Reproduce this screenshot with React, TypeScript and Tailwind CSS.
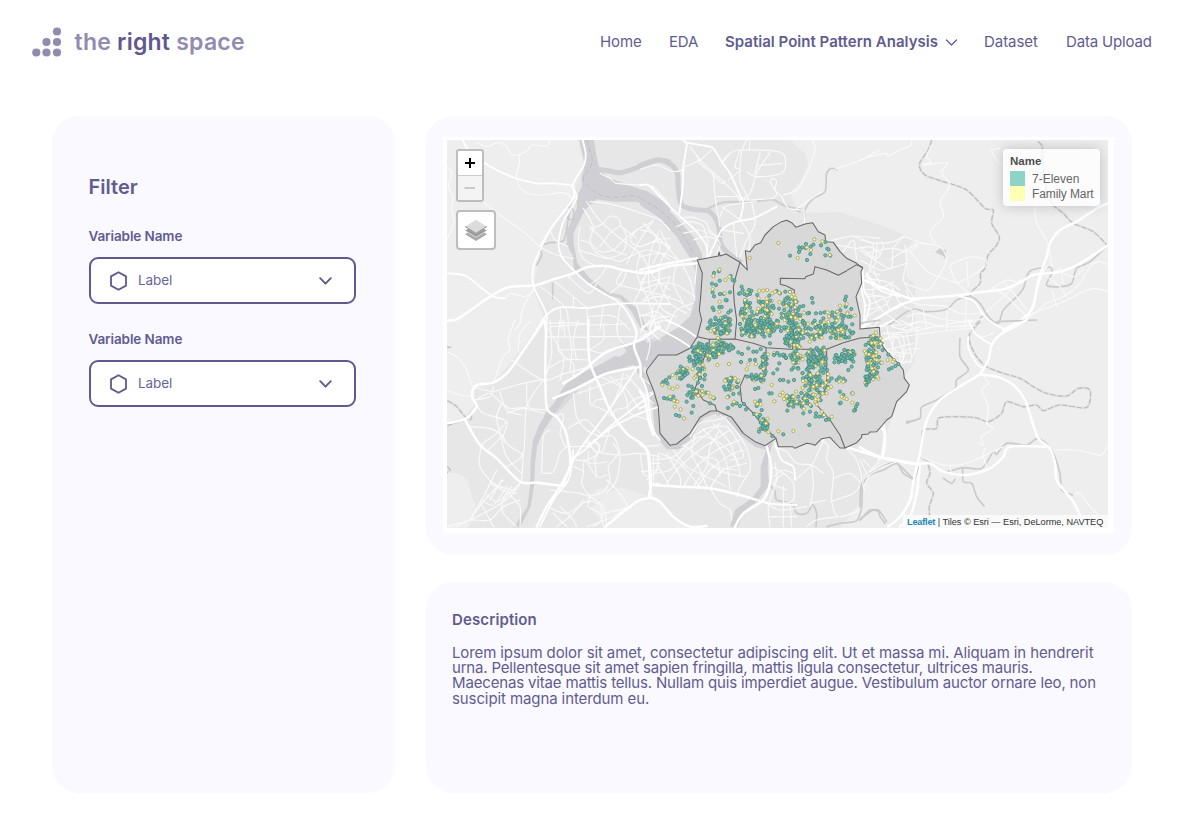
import React from "react";

type Tile = {
  x: number;
  y: number;
  major?: string[];
  mid?: string[];
  minor?: string[];
  stream?: string[];
  trail?: string[];
};

// Street geometry, grouped by map sheet; each sheet is drawn at three units per pixel.
const tiles: Tile[] = [
  {
    x: 440,
    y: 130,
    major: [
      "20,572 50,568 100,535 150,500 205,472 285,466 340,448 400,430 440,412 500,408 540,418 600,428 640,422 690,408",
    ],
    mid: [
      "68,30 85,60 135,100 180,125 230,146 290,160 340,160 392,166 405,185",
      "428,30 437,70 432,105 400,160 402,195 380,235 330,300 300,360 280,410 280,466 300,510 320,555 316,600",
      "400,180 410,205 372,270 358,320 356,350 368,385 410,430 450,465 500,495 540,520 570,560 590,600",
      "290,600 320,555 360,532 440,534 490,526 560,520 690,522",
      "405,200 340,285 300,350",
      "20,430 75,436 120,470 160,500 195,505",
    ],
    minor: [
      "110,38 140,50 175,38 200,50 215,75 236,75 238,100 230,140 245,178 290,195 370,188 395,205",
      "236,75 262,62 275,45 320,48 330,30",
      "130,215 180,255 250,305 300,350 350,375 400,385",
      "20,110 35,130 25,170 40,200 35,235 42,280 20,330",
      "195,505 215,490 255,500 285,480",
      "285,470 250,530 240,580 225,600",
      "480,130 510,145 530,160 600,165 640,170 690,225",
      "450,215 500,220 560,235 620,255 660,270 690,300",
      "440,215 470,260 510,300 560,340 600,370 620,400 640,440 690,480",
      "430,235 460,290 450,330 470,370 540,395",
      "450,300 490,280 500,265 520,258 538,268 545,290 590,325",
      "450,290 480,320 520,360 560,375",
      "420,290 415,340 430,385 470,410",
      "420,330 450,340 480,365 520,360 540,340 590,300 640,275",
      "415,360 450,370 500,385 545,370 560,330 545,290 510,310 480,350",
      "590,300 570,330 600,350 650,330 690,325",
      "540,395 580,375 620,360 660,370 690,390",
      "600,370 590,420 600,460 620,500 640,560 650,600",
      "500,410 480,440 450,465",
      "560,425 545,460 510,490",
      "620,425 600,480 580,520",
      "660,415 650,470 610,510",
      "690,440 650,450 600,460",
      "300,470 340,500 380,540 385,600",
      "345,455 400,500 440,534",
      "385,440 445,490 470,460",
      "440,534 445,600",
      "400,500 400,534",
      "490,526 480,600",
      "540,524 530,600",
      "320,580 400,578 440,582",
      "360,532 365,600",
      "445,560 520,558 570,600",
      "590,525 610,600",
      "640,525 630,600",
      "690,560 600,555",
      "330,300 345,330 385,350",
      "550,420 530,460 600,480 690,500",
      "610,280 640,310 660,350 640,400",
      "640,270 600,330 560,400",
      "660,300 690,360",
      "600,600 625,580 690,570",
    ],
    stream: [
      "395,225 385,265 372,330 330,338 300,350 305,375 290,405",
      "338,460 338,505",
      "384,230 400,240 398,270 380,262",
    ],
  },
  {
    x: 640,
    y: 130,
    major: ["0,430 40,425 90,408 170,400", "0,420 60,405 170,385"],
    mid: [
      "130,30 140,45 130,110 128,170 118,250",
      "140,38 200,48 220,55 245,95 270,130 295,185 310,220 300,270",
      "0,165 25,165 60,200 110,250 165,300 200,350 200,400",
      "200,395 245,300 290,275 340,265 410,230",
      "668,415 672,480 690,520 668,600",
    ],
    minor: [
      "0,118 50,105 100,125 135,118",
      "150,50 190,100 240,145 290,195 300,215",
      "135,110 180,90 215,60",
      "170,75 180,100 215,130 245,160 255,155",
      "220,130 225,200 240,290",
      "245,95 270,70 300,60 425,68 428,128 350,140 320,125",
      "270,70 250,95",
      "330,30 328,62",
      "300,60 285,110 300,120 265,150",
      "390,68 352,125 330,190 300,210",
      "360,68 345,130",
      "350,108 425,100",
      "320,30 305,65 300,150 325,205",
      "228,200 290,200 330,210 400,205",
      "240,260 255,230 300,220 350,215",
      "245,230 300,270 330,320 325,370",
      "335,215 345,280 320,330 300,380",
      "400,205 410,190 390,155 400,145 410,155 405,180 425,200 445,235 490,240",
      "515,30 525,60 500,130 470,180 430,195",
      "720,60 690,75 665,90 585,118",
      "465,240 500,215 545,185",
      "495,240 493,280",
      "120,265 160,262 200,280 210,310 245,320",
      "110,290 150,275 190,290 205,350",
      "130,310 180,300 200,310",
      "245,300 310,310",
      "210,300 240,340 230,370",
      "160,330 200,320 235,330",
      "280,280 290,380",
      "0,300 40,310 80,350 120,395",
      "0,350 50,335 90,350",
      "0,380 70,370 130,400",
      "55,310 30,370 25,420 0,460",
      "90,350 60,400 60,460 90,520 140,550",
      "110,400 100,460 130,520",
      "25,425 30,480 70,540 110,560",
      "0,480 60,460 110,465 165,500",
      "0,520 50,500 110,510 150,540",
      "30,600 60,520 90,440",
      "0,560 50,545 90,580",
      "80,600 110,540 160,520",
      "130,410 150,450 165,510",
      "170,405 165,460",
      "0,600 40,570 80,560",
      "565,335 600,325 640,318 720,325",
      "590,345 650,355 690,350 720,370",
      "610,365 640,330 650,390",
      "640,320 700,345 690,420 720,435",
      "680,440 700,470 720,470",
      "675,490 720,500",
      "680,540 720,530",
      "700,420 720,460",
      "670,575 700,590 720,560",
    ],
    stream: [
      "495,260 497,235 520,205 555,185 560,130 575,115 590,120",
      "480,245 460,238",
    ],
  },
  {
    x: 860,
    y: 130,
    major: [
      "10,450 60,470 110,490 150,505 220,502 300,495 370,485 430,478 480,458 520,435 600,425 660,400 745,345",
      "0,595 60,560 120,525 180,505",
      "430,600 490,565 520,530 535,450 560,380 570,340 600,300 650,275 680,255 720,230 745,220",
    ],
    mid: [
      "0,420 5,480 15,530 8,600",
      "20,430 60,480 120,500",
      "500,570 520,520 545,430 560,410",
      "300,500 340,512 370,555 400,580 440,600",
    ],
    minor: [
      "0,90 30,80 80,70 85,78 120,60 150,48 155,32",
      "215,45 200,80 215,95 190,105 260,98 245,130 270,165 240,215 250,260 210,305 225,340",
      "420,55 395,60 410,90 430,110",
      "550,170 525,230 530,280 555,320 570,370 575,410",
      "0,330 50,340 100,335 130,320 160,330 190,340 240,350 260,390 235,440 205,480 160,470 135,460",
      "130,320 100,355 90,415 0,360",
      "0,350 50,385 70,350 65,335",
      "20,370 60,360 100,355 145,365 175,345",
      "0,390 60,420 90,415 140,400",
      "50,345 45,400 15,440",
      "135,345 140,400 130,450 160,500",
      "150,365 180,400 210,430 290,460 325,490",
      "175,340 120,370 90,390",
      "290,460 330,440 360,420 380,395 340,380 290,395 270,410 290,460",
      "320,395 325,470",
      "20,445 80,455 120,480",
      "10,480 60,475 100,455",
      "20,500 70,500 90,540 120,530",
      "45,450 40,500 70,545 120,580",
      "10,530 50,515 110,490",
      "20,560 80,520 100,480",
      "90,460 120,520 155,540",
      "140,480 160,520 250,528 300,550 370,550",
      "140,560 180,550 260,570 330,575 370,565",
      "160,540 155,600",
      "190,540 200,600",
      "260,540 260,600",
      "320,505 315,600",
      "120,600 180,575 250,590 360,585",
      "390,480 440,450 480,460",
      "400,475 440,500 500,560",
      "430,455 470,500 500,540",
      "380,545 430,500 480,450",
      "560,440 600,470 620,500",
      "575,480 590,530",
      "580,440 600,415 610,460",
      "430,600 520,550 600,520 660,490 700,475 745,485",
      "450,600 500,570 560,520 610,500 660,460 690,410 720,395 745,405",
      "600,425 640,440 670,420",
      "740,350 660,405",
    ],
    stream: [
      "80,590 140,545 165,537 200,545 260,538 290,510 330,500 360,520 385,560 415,580 430,540 470,500 490,475 500,440 515,420 570,412 575,430 560,465 600,470 635,460 650,415 690,395 745,345",
      "370,555 350,580 340,600",
    ],
    trail: [
      "215,30 205,60 178,103 195,135 250,155 320,180 375,235 400,240 395,280 418,320 410,345 385,375 375,415 362,430 360,460 335,485 330,500",
      "535,35 547,50 548,90 560,180 580,225 610,250 640,280 700,305 745,350",
    ],
  },
  {
    x: 440,
    y: 320,
    major: [
      "20,310 75,297 110,260 98,235 98,210 115,193 160,188 205,155 255,85 310,5",
      "312,0 318,30 316,120 320,262 350,290 375,330 388,390 390,440 360,500 320,560 290,620",
      "75,300 120,375 170,415 240,485 290,488 370,498",
      "445,0 448,120 480,200 510,270 560,340 610,375 625,410 632,520",
      "575,0 590,40 582,80 600,130 602,170",
      "370,190 420,160 500,95 590,65 660,20",
      "340,235 400,210 440,190 500,160 600,140",
      "495,620 570,560 600,540 640,535 660,545",
    ],
    mid: [
      "590,145 500,280 440,360 400,420 385,480 340,540 300,620",
      "390,420 440,385 510,320 600,250 640,220",
      "440,380 520,320 600,280 660,260",
      "602,170 620,210 632,300 645,340 660,360",
      "370,498 395,420 400,390",
    ],
    minor: [
      "20,95 50,110 80,150 100,200 160,215",
      "20,210 60,225 100,228",
      "225,0 205,55 210,90 190,110 160,190",
      "235,95 240,40 270,5",
      "215,120 310,180 375,160 450,140",
      "160,215 230,195 310,178",
      "115,235 150,220 185,250 210,265 260,262",
      "100,240 150,230 160,200",
      "180,215 200,270 245,285",
      "310,180 260,260 250,400 200,440",
      "260,190 265,260 320,270",
      "110,255 130,280 200,305 190,360 250,405",
      "200,305 170,340 130,370 120,400 120,440 160,490 220,510 240,490",
      "90,320 150,325 185,345 200,370",
      "200,280 250,265 310,280",
      "185,250 170,290 180,340 200,410 245,460",
      "140,395 185,350",
      "250,400 245,480",
      "170,450 130,530 90,600",
      "90,600 130,545 190,480",
      "90,600 150,570 210,530 240,490",
      "125,540 160,555 200,500",
      "150,490 200,515 230,520",
      "140,525 175,545 215,500",
      "185,480 150,540",
      "50,620 90,600 150,600 190,560 240,540",
      "120,545 150,600 160,620",
      "240,490 190,540 190,580 230,620",
      "205,520 240,560 240,620",
      "20,620 80,605",
      "330,0 335,100 320,160",
      "316,50 445,52",
      "360,0 355,90 400,130 400,170",
      "385,20 395,90 390,150",
      "415,0 400,60 410,120",
      "330,20 440,12",
      "355,90 445,88",
      "320,150 370,120 445,120",
      "370,0 375,50",
      "448,15 560,12",
      "490,15 490,60 448,90",
      "450,50 580,50",
      "530,12 535,50 560,80",
      "320,20 370,110 360,180",
      "448,90 490,100 520,90",
      "600,50 640,30 660,5",
      "640,0 630,30 660,60",
      "310,460 340,455 360,400 380,380",
      "330,330 310,350 305,460",
      "350,290 365,280 370,300 360,340 375,380",
      "400,220 410,290 440,330 480,350",
      "385,325 410,310 440,300 490,350",
      "450,200 450,250 480,265 500,275 520,290 525,270 560,262 580,240 640,215",
      "415,220 460,205 530,180 560,175",
      "480,170 540,200 560,240 570,280 630,300",
      "510,170 560,210 600,270",
      "560,165 600,210 640,250",
      "460,250 470,240 500,235",
      "550,160 540,200 520,250",
      "380,380 450,380 470,395 540,405 600,400 660,410",
      "430,370 470,370 475,400 440,420 400,420",
      "440,355 465,395 490,390 510,320",
      "400,440 430,455 425,490 450,525 490,515 510,480 505,440 535,400 520,370",
      "430,455 435,420 470,470 500,465",
      "445,395 450,430 500,425",
      "460,360 480,380 465,420 470,470",
      "480,350 520,350 540,405 530,480 500,520",
      "330,510 380,515 420,520 450,530",
      "450,525 445,560 480,580 490,620",
      "320,560 380,580 440,545 480,555 485,600 460,620",
      "360,560 400,600 410,620",
      "340,580 380,620",
      "430,540 400,580 350,620",
      "500,480 530,510 560,560 490,580",
      "440,620 520,590 560,560",
      "600,400 610,460 625,470",
      "625,430 660,430",
      "605,455 660,450",
      "640,410 640,490",
      "625,490 660,490",
      "610,380 660,375",
      "500,620 490,560 450,530",
    ],
    trail: [
      "22,242 50,260 75,290 90,300 95,290 88,282",
      "22,316 70,302",
      "22,82 32,82",
      "22,440 30,450 22,458",
    ],
  },
  {
    x: 640,
    y: 320,
    major: [
      "0,372 25,400 32,495 28,530 60,545 100,590 150,620 200,618",
      "35,495 120,500 210,505 300,525 350,540",
      "380,380 392,430 390,490 370,540 310,580 285,620",
      "615,380 680,400 730,415 810,430 840,432",
      "725,300 735,340 725,415",
      "780,620 810,590 830,520 840,430",
      "0,215 15,240 25,300 40,345",
    ],
    mid: [
      "45,20 110,55 150,80",
      "80,0 130,25 175,55",
      "0,265 20,255",
      "405,370 425,420 460,440 465,480",
      "660,380 690,400",
      "350,540 400,552 470,555",
    ],
    minor: [
      "10,30 30,70 20,120",
      "30,0 0,40",
      "5,20 50,10 70,0",
      "0,170 40,200",
      "150,350 180,310 230,300 260,290",
      "240,285 260,300 300,350 325,400 330,450 300,500 290,530",
      "160,350 200,325 260,320 290,360 310,410 270,420",
      "120,390 180,350 240,370 290,420 300,470",
      "100,390 140,440 200,470 260,500",
      "60,400 120,430 180,500",
      "130,375 180,410 230,440 290,450",
      "45,420 100,410 140,380",
      "40,460 90,450 130,400 190,350 240,310",
      "80,490 120,440 180,390 270,330",
      "130,500 170,440 230,390 300,360",
      "170,505 210,450 280,400 315,390",
      "210,505 250,450 320,430",
      "190,330 230,370 260,430 270,510",
      "220,310 270,370 295,440",
      "80,400 120,470 120,500",
      "50,430 90,500",
      "165,345 155,400 180,450 200,500",
      "240,330 210,380 200,440 160,500",
      "20,480 50,450 55,400",
      "200,430 260,460 320,470",
      "180,410 230,420 240,470",
      "400,380 440,395 470,430 515,435 550,460",
      "395,440 430,460 460,490 460,540 430,550",
      "430,460 400,490 440,510",
      "400,470 430,450 460,460",
      "465,480 515,435 540,385 555,355",
      "515,435 520,500 510,560",
      "545,360 565,380 560,420 580,460 575,540 595,590 660,570",
      "580,475 630,460 665,490",
      "620,385 650,420 665,480 640,520 570,545",
      "510,550 560,540",
      "405,430 410,480 385,560 390,620",
      "430,500 430,620",
      "390,590 470,590",
      "450,550 455,620",
      "380,550 420,570 500,560",
      "500,620 530,600 595,590",
      "30,500 40,540",
      "210,505 240,550 270,570 275,600",
      "720,40 740,90 790,110 800,90 840,85",
      "725,60 770,50 790,110 780,130",
      "755,20 800,30 840,20",
      "740,90 820,70",
      "760,50 760,110 790,130 800,120",
      "800,40 815,110",
      "720,20 780,15 840,5",
      "690,440 670,420",
      "670,500 700,450 740,430",
      "840,500 800,560 790,600",
    ],
    stream: [
      "390,495 405,515 410,540 450,548 462,560 468,578 485,583 503,578 518,555 530,580 528,620",
      "560,620 600,610 650,602 665,560 668,500 690,465 730,450 770,430 790,460 820,478",
      "660,600 690,570 715,575 720,590 735,610",
      "800,310 840,295",
      "100,385 135,382",
    ],
  },
  {
    x: 860,
    y: 320,
    major: [
      "85,620 120,590 150,540 163,470 180,400 190,340 205,290 240,240 290,205 360,163",
      "360,163 410,170 460,195 495,240 515,300 535,355 570,385 585,430 590,480 620,520 640,545 660,585",
      "360,163 385,120 395,75 420,45 470,15 500,0",
      "0,383 60,410 110,420 170,432 210,430 250,455 320,465 390,445 430,410 450,380 560,380",
    ],
    mid: [
      "63,320 75,350 72,400 55,420",
      "325,50 325,85 350,130 370,145",
      "325,0 345,40 395,75",
      "0,45 60,20 100,0",
    ],
    minor: [
      "70,40 150,35 250,15 340,0",
      "65,60 160,45 280,30 340,25",
      "80,20 90,60 110,95 150,100",
      "120,0 170,30 165,90 150,125",
      "90,45 130,50 130,120",
      "60,30 80,90 120,100 120,125 155,125",
      "370,165 385,190 365,210 385,260 380,310 400,325 365,350 370,375 355,370",
      "375,385 370,410 380,440",
      "180,410 250,435 320,430 430,380",
      "585,390 650,390 715,405 730,400 742,380",
      "640,525 660,520 690,560 715,585",
      "0,420 20,460",
      "15,515 10,480 60,445 110,425",
      "350,45 370,50 400,40",
      "270,440 275,465",
      "30,455 55,425",
    ],
    stream: [
      "180,410 205,425 250,455 310,443 365,445 400,395 410,403 440,370 500,375 535,355 575,390 600,460 605,510 640,525",
      "0,560 5,490 40,455 105,428 160,475 175,440",
      "300,55 300,110 325,150 290,180 285,205 230,240 185,262 180,295 140,305",
      "250,475 275,490 285,478",
      "308,445 310,485 335,490 350,530 372,558",
      "0,600 30,575 55,570 80,605",
      "0,10 60,0",
      "530,0 410,5",
    ],
    trail: [
      "360,5 330,40 330,70 350,110 380,140 430,160 480,175 520,200 560,220 620,228 655,205 690,210 680,262 600,255 550,272 530,255 490,260 440,245 425,280 385,305 340,292 240,293 230,325 190,330 185,370 175,420 165,470",
      "205,435 210,460 200,490 220,520 208,560 210,600",
    ],
  },
];

const districts =
  "172,390 235,378 237,366 240,378 258,372 300,397 322,420 316,362 330,365 345,345 362,338 375,315 400,290 425,275 440,271 455,278 468,292 495,282 518,278 535,305 555,315 557,335 580,337 600,365 620,385 650,400 668,415 663,425 665,460 648,500 660,555 660,597 718,592 722,640 745,672 775,700 790,720 793,745 808,765 800,785 770,815 755,860 740,870 725,888 710,905 690,906 685,912 665,914 665,922 650,938 615,954 600,954 570,922 545,926 525,946 515,942 500,940 465,955 458,950 415,950 408,925 375,947 345,935 310,910 275,862 230,842 210,844 180,862 150,910 110,942 90,946 60,910 55,830 42,785 20,730 20,720 55,675 110,675 150,655 172,620 185,570 178,540 182,500 187,430";

const innerBorders = [
  "300,397 290,430 280,470 283,520 290,570 285,627",
  "172,620 205,628 285,627 340,640 380,653 450,658 560,658 610,638 660,624 715,621",
  "210,628 190,690 180,740 165,775 190,810 225,826 230,842",
  "378,653 378,735 350,750 315,735 300,770 305,815 345,855 370,890 408,925",
  "560,658 560,770 528,822 570,870 600,915 615,954",
  "668,412 650,404 620,422 595,436 560,420 525,410 520,432 497,440 495,446 421,445 421,463 440,468 463,480 462,570 458,657",
];

const greenStores =
  "498,342 543,346 556,336 477,352 487,352 477,366 512,350 520,344 511,372 562,356 566,359 556,376 571,377 501,390 450,377 497,354 480,358 237,424 222,429 272,438 239,452 228,465 216,461 283,452 278,450 270,487 218,487 240,492 251,492 222,499 260,511 257,510 218,533 221,540 238,531 245,531 272,542 265,548 516,504 518,518 618,500 615,510 617,530 634,537 601,541 503,550 528,550 542,549 554,547 577,547 590,547 524,572 542,575 550,565 305,470 308,480 300,490 327,480 330,492 352,495 388,497 410,483 420,490 436,485 450,485 390,512 430,522 447,520 470,515 480,530 490,528 417,536 433,540 452,540 70,756 78,750 88,742 82,760 67,760 145,767 142,795 140,815 160,828 155,848 72,804 82,806 92,808 100,800 105,812 108,855 118,858 122,710 128,725 135,735 142,730 120,745 125,742 155,770 195,735 210,820 222,805 252,770 262,778 270,760 268,770 260,748 280,792 298,790 292,756 265,800 264,834 278,824 300,828 290,820 318,838 312,822 345,777 355,774 388,790 395,790 322,740 365,840 342,852 352,820 360,812 350,828 445,800 455,815 460,830 442,842 475,800 480,820 508,885 430,913 357,905 397,918 370,890 372,880 362,878 375,895 382,893 355,862 360,855 352,860 490,850 510,845 528,850 538,860 548,858 558,870 567,868 527,860 600,785 600,820 610,795 637,790 652,822 648,830 645,840 642,842 602,818 598,742 615,752 610,746 590,750 575,745 640,695 635,710 625,720 680,740 685,750 695,740 687,755 710,730 747,718 755,714 766,708 775,702 728,660 745,674 722,698 680,690 680,720 710,700 700,705 295,667 306,672 303,696 325,655 340,665 350,665 345,690 330,690 418,700 412,718 400,730 390,640 420,750 430,750 462,750 445,755";
const yellowStores =
  "415,339 329,384 523,328 547,334 500,352 513,360 473,384 570,375 239,419 220,438 256,450 268,440 218,477 254,490 239,515 238,545 358,482 370,482 382,480 397,490 315,510 356,505 405,485 418,488 450,486 465,503 467,515 600,527 620,522 644,557 590,572 592,545 563,547 98,735 88,772 98,776 112,770 67,765 102,812 112,815 104,830 122,838 132,865 90,800 232,705 267,702 325,703 348,702 320,718 255,752 270,745 285,745 295,752 262,802 282,815 187,783 205,788 212,800 220,803 345,815 352,822 362,823 403,814 428,788 420,795 440,798 432,807 468,785 460,800 470,815 415,904 460,903 383,866 378,880 385,906 350,853 638,790 605,800 613,805 620,807 637,818 610,755 598,755 762,690 743,690 759,695 725,698 710,690 712,740 565,775 573,770 520,770 530,765 560,790 548,790 530,823 545,845 552,855 575,860 490,820 495,805 395,765";

// Dense blocks: centre, half extents, then the number of stores of each chain.
const blocks: number[][] = [
  [245, 575, 36, 18, 24, 5],
  [240, 603, 38, 20, 22, 7],
  [318, 545, 18, 65, 42, 12],
  [378, 540, 22, 34, 30, 14],
  [340, 595, 40, 25, 46, 10],
  [392, 590, 30, 26, 40, 10],
  [438, 570, 24, 60, 32, 10],
  [465, 560, 18, 70, 26, 12],
  [455, 625, 22, 22, 28, 4],
  [495, 600, 22, 45, 14, 8],
  [540, 605, 32, 26, 26, 12],
  [590, 600, 34, 26, 24, 12],
  [620, 605, 20, 18, 18, 4],
  [600, 560, 40, 16, 8, 7],
  [182, 660, 20, 24, 42, 6],
  [170, 695, 32, 20, 16, 10],
  [230, 650, 26, 22, 32, 16],
  [262, 650, 20, 12, 22, 6],
  [225, 672, 20, 10, 12, 5],
  [130, 730, 18, 14, 14, 4],
  [178, 735, 18, 44, 14, 5],
  [172, 790, 24, 20, 12, 7],
  [372, 690, 12, 32, 18, 6],
  [352, 744, 24, 10, 18, 4],
  [430, 675, 26, 12, 8, 1],
  [470, 680, 20, 36, 20, 15],
  [525, 685, 26, 28, 54, 12],
  [550, 690, 14, 40, 18, 8],
  [505, 755, 26, 44, 30, 16],
  [540, 765, 24, 44, 22, 12],
  [455, 812, 20, 16, 14, 6],
  [500, 812, 28, 24, 16, 8],
  [600, 685, 20, 12, 26, 3],
  [628, 675, 20, 14, 22, 3],
  [700, 635, 22, 24, 20, 14],
  [695, 685, 20, 34, 26, 18],
  [700, 730, 18, 20, 12, 5],
  [682, 750, 8, 14, 9, 1],
  [272, 765, 22, 20, 10, 5],
  [372, 885, 13, 18, 16, 4],
];

type Store = { x: number; y: number; green: boolean };

function points(list: string): number[][] {
  return list.split(" ").map((p) => p.split(",").map(Number));
}

// Rounds a polyline into a gentle curve through all of its points.
function curve(list: string): string {
  const p = points(list);
  let d = `M${p[0][0]} ${p[0][1]}`;
  for (let i = 0; i < p.length - 1; i++) {
    const a = p[Math.max(0, i - 1)];
    const b = p[i];
    const c = p[i + 1];
    const e = p[Math.min(p.length - 1, i + 2)];
    const k = 0.14;
    const n = [b[0] + (c[0] - a[0]) * k, b[1] + (c[1] - a[1]) * k, c[0] - (e[0] - b[0]) * k, c[1] - (e[1] - b[1]) * k];
    d += `C${n.map((v) => v.toFixed(1)).join(" ")} ${c[0]} ${c[1]}`;
  }
  return d;
}

function buildStores(): Store[] {
  let seed = 7321;
  const rnd = () => {
    seed = (seed * 16807) % 2147483647;
    return seed / 2147483647;
  };
  const out: Store[] = [];
  for (const [cx, cy, rx, ry, g, y] of blocks) {
    for (let i = 0; i < g + y; i++) {
      out.push({
        x: Math.round(cx + (rnd() + rnd() - 1) * rx * 1.25),
        y: Math.round(cy + (rnd() + rnd() - 1) * ry * 1.25),
        green: i % Math.max(2, Math.round((g + y) / y)) !== 1,
      });
    }
  }
  const listed = (list: string, green: boolean) => points(list).map(([x, y]) => ({ x, y, green }));
  return [...out, ...listed(greenStores, true), ...listed(yellowStores, false)];
}

const stores = buildStores();

function Lines({ items, stroke, width, dash, sharp }: { items?: string[]; stroke: string; width: number; dash?: string; sharp?: boolean }) {
  return (
    <g fill="none" stroke={stroke} strokeWidth={width} strokeDasharray={dash} strokeLinejoin="round" strokeLinecap={dash ? "butt" : "round"}>
      {(items ?? []).map((p, i) => (sharp ? <polyline key={i} points={p} /> : <path key={i} d={curve(p)} />))}
    </g>
  );
}

const place = (x: number, y: number) => `translate(${x} ${y}) scale(0.33333)`;

function MapDrawing() {
  const water = "#d0d0d4";
  return (
    <svg className="block h-full w-full" viewBox="447 140 661 388" preserveAspectRatio="none" aria-hidden="true">
      <rect x="447" y="140" width="661" height="388" fill="#eeeeee" />
      <path
        fill="#e7e7e7"
        d="M578 140 L583 163 574 193 540 250 533 290 545 320 520 350 495 382 475 390 474 405 462 420 447 425V472L460 474 468 480 472 498 476 505 474 515 468 528H605L640 500 660 502 672 515 690 528H840L862 500 863 475 880 460 885 440 905 375 915 362 915 283 907 278 905 250 915 240 880 225 840 212 805 213 795 207 790 192 800 182 808 165 806 155 790 140Z"
      />
      <path fill="#ededed" d="M590 508l18-15 12-6 12 4 18 6-10 8-40 15zM588 497l10-8 12-2-4 10-12 4z" />
      <g transform={place(440, 130)}>
        <path
          fill={water}
          d="M418 30H462L470 80 478 115 500 140 560 165 620 183 690 225V280L640 235 590 215 520 215 470 208 435 240 400 310 402 345 412 400 450 445 500 485 545 496 590 535 625 600H605L575 545 540 505 500 495 440 455 402 418 398 375 380 345 382 300 410 235 410 200 425 170 425 140 435 105Z"
        />
        <path fill="none" stroke={water} strokeWidth="15" d={curve("475,118 505,122 540,128 600,110 650,90 692,97")} />
        <path fill="none" stroke="#b9b9bf" strokeWidth="2.4" strokeDasharray="16 8" d={curve("440,30 457,95 430,150 480,195 530,202 580,198 640,215 690,255")} />
      </g>
      <g transform={place(640, 130)}>
        <path fill={water} d="M0 190L60 215 110 265 160 320 185 370 190 430 186 500 180 540 187 575 172 620 150 655 110 675 55 675 20 715 0 700V650L60 615 30 640 60 625 110 595 150 560 165 510 168 440 160 400 110 320 60 265 0 225Z" />
        <path fill="none" stroke={water} strokeWidth="15" strokeLinejoin="round" d={curve("-5,108 30,96 60,90 95,105 112,130 115,180 125,225 160,238 205,243 228,268 238,300 242,340 265,370 305,398")} />
        <path fill="none" stroke={water} strokeWidth="7" d={curve("200,238 250,217 330,216 375,210 400,209 440,230 490,240")} />
        <path fill="none" stroke="#b9b9bf" strokeWidth="2.4" strokeDasharray="16 8" d={curve("0,205 60,240 120,300 160,370")} />
        <path fill={water} d="M-55 640L-20 640 20 630 10 720 45 785 55 830 60 910 90 946 110 942 150 910 180 862 210 844 270 855 310 910 345 935 375 947 400 930 385 990 383 1020 388 1065 350 1115 310 1145 295 1190H270L285 1140 335 1105 362 1070 362 1010 378 960 345 950 300 915 260 870 225 852 190 865 150 930 110 958 80 958 45 915 38 830 20 780 0 740 -20 700Z" />
      </g>
      <g transform={place(440, 320)}>
        <path fill="#dadadc" d="M590 142L500 160 420 205 380 250 350 280 340 260 400 185 480 140Z" />
        <path fill={water} d="M660 65L580 80 560 95 540 110 525 108 490 128 440 152 390 178 365 210 345 245 320 275 295 320 278 365 272 420 270 500 262 560 222 622H240L272 560 282 500 285 430 292 375 312 330 345 280 375 235 420 192 480 165 540 145 600 130 660 125Z" />
      </g>
      <g transform={place(860, 130)}>
        <path fill={water} d="M225 367l15-12 18 5v27l-10-10z" />
      </g>
      {tiles.map((t, i) => (
        <g key={i} transform={place(t.x, t.y)}>
          <Lines items={t.stream} stroke="#cbcbcf" width={5} />
          <Lines items={t.trail} stroke="#e0e0e0" width={7} />
          <Lines items={t.trail} stroke="#bcbcbc" width={3.5} dash="16 6" />
          <Lines items={t.minor} stroke="#fafafa" width={3.4} />
          <Lines items={t.mid} stroke="#ffffff" width={5.4} />
          <Lines items={t.major} stroke="#ffffff" width={7.5} />
        </g>
      ))}
      <g transform={place(640, 130)}>
        <polygon points={districts} fill="#d8d8d8" stroke="#686868" strokeWidth="3.2" strokeLinejoin="round" />
        <Lines items={innerBorders} stroke="#686868" width={3.2} sharp />
        {stores.map((s, i) => (
          <circle
            key={i}
            cx={s.x}
            cy={s.y}
            r="4.9"
            fill={s.green ? "#69c0af" : "#fafa9c"}
            stroke={s.green ? "#4d857c" : "#a19d6c"}
            strokeWidth="2.4"
          />
        ))}
      </g>
    </svg>
  );
}

function Logo() {
  const dots = [
    [56.5, 31], [46, 41.5], [56.5, 41.5], [35.8, 52], [46, 52], [56.5, 52],
  ];
  return (
    <svg className="h-[30px] w-[30px]" viewBox="31.5 26.5 30 30" aria-hidden="true">
      {dots.map(([x, y], i) => (
        <circle key={i} cx={x} cy={y} r="4.1" fill="#918bb0" />
      ))}
    </svg>
  );
}

function Select({ label }: { label: string }) {
  return (
    <div className="flex flex-col">
      <span className="text-[13.5px] leading-[18px] font-semibold tracking-[-0.1px]">Variable Name</span>
      <button className="mt-3 flex h-[47px] w-[267px] items-center rounded-[9px] border-2 border-[#5f5a8d] bg-white pr-[22px] pl-[19px]">
        <svg className="h-5 w-[17px]" viewBox="0 0 17 20" fill="none" stroke="#5f5a8d" strokeWidth="1.8" strokeLinejoin="round" aria-hidden="true">
          <path d="M8.5 1.2L16 5.4V14.6L8.5 18.8L1 14.6V5.4Z" />
        </svg>
        <span className="ml-[11.5px] text-[13.5px] tracking-[-0.1px] text-[#69649a]">{label}</span>
        <svg className="ml-auto h-3 w-[13px]" viewBox="0 0 13 12" fill="none" stroke="#5f5a8d" strokeWidth="1.9" strokeLinecap="round" strokeLinejoin="round" aria-hidden="true">
          <path d="M1.2 3.2L6.5 8.6L11.8 3.2" />
        </svg>
      </button>
    </div>
  );
}

function LayersIcon() {
  return (
    <svg className="h-[26px] w-[26px]" viewBox="0 0 26 26" aria-hidden="true">
      <path d="M2 17.2L13 24L24 17.2L21 15.3L13 20.2L5 15.3Z" fill="#ababab" />
      <path d="M2 13.4L13 20.2L24 13.4L21 11.6L13 16.5L5 11.6Z" fill="#999" stroke="#fff" strokeWidth=".5" />
      <path d="M13 2.6L24 9.4L13 16.3L2 9.4Z" fill="#dcdcdc" stroke="#fff" strokeWidth=".4" />
      <path d="M2 9.4L13 16.3L24 9.4" fill="none" stroke="#808080" strokeWidth=".9" />
    </svg>
  );
}

export default function App() {
  return (
    <div className="h-[840px] w-[1189px] overflow-hidden bg-white font-['Inter',sans-serif] text-[#615c8f]">
      <header className="flex h-[84px] items-center justify-between pr-[37px] pl-[31.5px]">
        <div className="flex items-center gap-[13px]">
          <Logo />
          <span className="text-[23px] font-semibold tracking-[0.23px] whitespace-nowrap text-[#918bb0]">
            the <span className="text-[#5f598e]">right</span> space
          </span>
        </div>
        <nav className="flex items-center text-[15px] whitespace-nowrap">
          <a className="w-[69px] tracking-[-0.1px]">Home</a>
          <a className="w-[56px] tracking-[-0.2px]">EDA</a>
          <a className="flex w-[259px] items-center font-semibold">
            <span className="w-[220px] tracking-[0.02px]">Spatial Point Pattern Analysis</span>
            <svg className="h-[9px] w-[13px]" viewBox="0 0 13 9" fill="none" stroke="#5f5a8d" strokeWidth="1.3" strokeLinecap="round" strokeLinejoin="round" aria-hidden="true">
              <path d="M1.5 2L6.5 7L11.5 2" />
            </svg>
          </a>
          <a className="w-[82px] tracking-[-0.05px]">Dataset</a>
          <a className="w-[86px] tracking-[-0.17px]">Data Upload</a>
        </nav>
      </header>

      <main className="flex gap-[31px] pt-8 pl-[52px]">
        <aside className="flex h-[677px] w-[343px] flex-col rounded-[27px] bg-[#faf9ff] pt-[58px] pl-[36.5px]">
          <h2 className="text-[20px] leading-[26px] font-semibold">Filter</h2>
          <div className="mt-[27px] flex flex-col gap-[26px]">
            <Select label="Label" />
            <Select label="Label" />
          </div>
        </aside>

        <div className="flex w-[706px] flex-col gap-[27px]">
          <section className="h-[439px] rounded-[27px] bg-[#faf9ff] pt-[21px] pl-[17px]">
            <div className="h-[396px] w-[671px] bg-white pt-[3px] pl-1">
              <div className="relative h-[388px] w-[661px] overflow-hidden font-['Liberation_Sans',Arial,sans-serif]">
                <MapDrawing />
                <div className="absolute top-[9px] left-[9px] flex flex-col gap-2">
                  <div className="flex h-[53px] w-7 flex-col overflow-hidden rounded-[3px] border-2 border-[#bdbdbd] bg-white">
                    <span className="flex h-[25px] items-center justify-center border-b border-[#ccc]">
                      <svg className="h-3 w-3" viewBox="0 0 12 12" stroke="#000" strokeWidth="2" aria-hidden="true">
                        <path d="M1 6H11M6 1V11" />
                      </svg>
                    </span>
                    <span className="flex flex-1 items-center justify-center bg-[#f4f4f4]">
                      <svg className="h-3 w-3" viewBox="0 0 12 12" stroke="#bbb" strokeWidth="1.6" aria-hidden="true">
                        <path d="M0.5 6H11" />
                      </svg>
                    </span>
                  </div>
                  <div className="flex h-10 w-10 items-center justify-center rounded-[4px] border-2 border-[#bdbdbd] bg-white">
                    <LayersIcon />
                  </div>
                </div>
                <div className="absolute top-[9px] right-[8px] h-[57px] w-[97px] rounded-[4px] bg-white/80 pt-[5px] pl-[7px] text-[12px] leading-[15px] text-[#666] shadow-[0_0_13px_rgba(0,0,0,0.2)]">
                  <div className="text-[11.5px] font-bold text-[#4f4f4f]">Name</div>
                  <div className="mt-[2px] flex h-[15px] items-center">
                    <span className="h-[15px] w-[15px] bg-[#8dd3c7]" />
                    <span className="ml-[7px] pt-[2px]">7-Eleven</span>
                  </div>
                  <div className="flex h-[15px] items-center whitespace-nowrap">
                    <span className="h-[15px] w-[15px] bg-[#ffffb3]" />
                    <span className="ml-[7px] pt-[2px] tracking-[-0.1px]">Family Mart</span>
                  </div>
                </div>
                <div className="absolute right-0 bottom-0 h-[13px] w-[205px] bg-white/70 pl-1 text-[9.2px] leading-[14px] tracking-[-0.03px] whitespace-nowrap text-[#333]">
                  <span className="font-bold tracking-[-0.2px] text-[#2187b2]">Leaflet</span> | Tiles © Esri — Esri, DeLorme, NAVTEQ
                </div>
              </div>
            </div>
          </section>

          <section className="h-[211px] rounded-[27px] bg-[#faf9ff] pt-7 pl-[26px]">
            <h3 className="text-[15px] leading-5 font-semibold tracking-[0.12px]">Description</h3>
            <p className="mt-[15px] flex flex-col text-[15px] leading-[15.2px] whitespace-nowrap">
              <span className="tracking-[-0.11px]">
                Lorem ipsum dolor sit amet, consectetur adipiscing elit. Ut et massa mi. Aliquam in hendrerit{" "}
              </span>
              <span className="tracking-[-0.19px]">
                urna. Pellentesque sit amet sapien fringilla, mattis ligula consectetur, ultrices mauris.{" "}
              </span>
              <span className="tracking-[-0.16px]">
                Maecenas vitae mattis tellus. Nullam quis imperdiet augue. Vestibulum auctor ornare leo, non{" "}
              </span>
              <span className="tracking-[-0.1px]">suscipit magna interdum eu.</span>
            </p>
          </section>
        </div>
      </main>
    </div>
  );
}
